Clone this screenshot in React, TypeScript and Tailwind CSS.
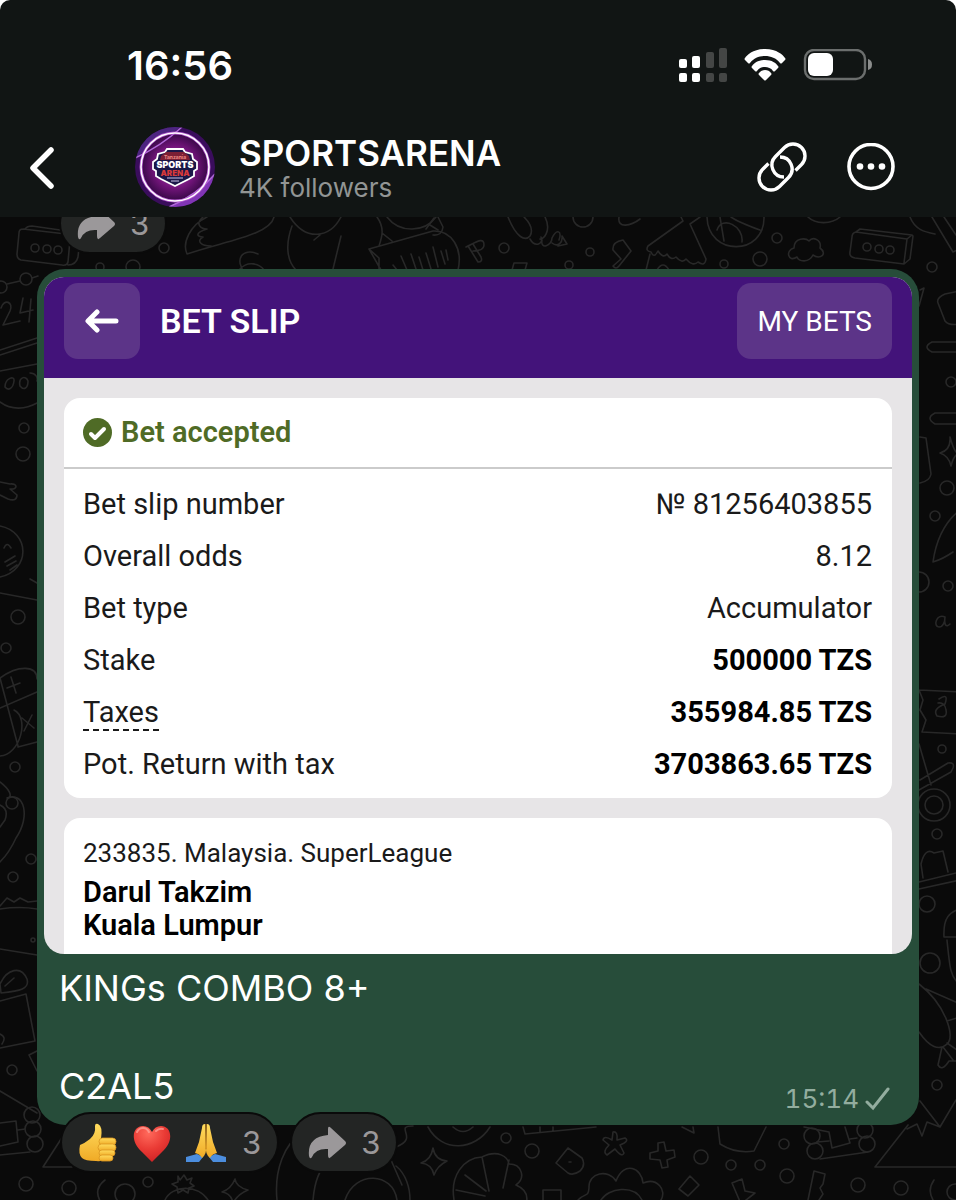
import type { ReactNode } from "react";

const slipRows = [
  { label: "Bet slip number", value: "№ 81256403855" },
  { label: "Overall odds", value: "8.12" },
  { label: "Bet type", value: "Accumulator" },
  { label: "Stake", value: "500000 TZS", strong: true },
  { label: "Taxes", value: "355984.85 TZS", strong: true, hint: true },
  { label: "Pot. Return with tax", value: "3703863.65 TZS", strong: true },
];

// small circles scattered over the chat wallpaper: [x, y, radius]
const dots = [
  [164, 248, 5], [100, 267, 4], [133, 267, 7], [504, 248, 5], [590, 252, 4], [569, 265, 4],
  [583, 217, 10], [777, 238, 5], [760, 259, 7], [724, 264, 4], [932, 267, 5],
  [26, 279, 6], [1, 287, 6], [24, 428, 5], [23, 454, 7], [18, 617, 7], [6, 648, 5],
  [15, 767, 5], [12, 803, 6], [31, 859, 5], [13, 877, 5], [33, 940, 2], [12, 1070, 5],
  [32, 1115, 8], [33, 1129, 8], [35, 1144, 8], [26, 1184, 7],
  [951, 382, 5], [947, 488, 7], [935, 516, 5], [948, 586, 5], [919, 582, 10], [942, 749, 4],
  [934, 805, 16], [934, 805, 9], [937, 834, 5], [927, 904, 8], [930, 963, 10], [937, 1085, 5],
  [69, 1188, 7], [148, 1182, 5], [125, 1194, 10], [506, 1138, 5], [532, 1151, 7], [701, 1157, 7],
  [731, 1165, 5], [760, 1165, 5], [784, 1144, 5], [787, 1176, 7], [858, 1185, 7], [901, 1188, 7],
  [812, 1136, 8], [815, 1151, 8], [865, 1130, 8], [867, 1144, 8], [955, 1192, 8],
  [35, 248, 4], [47, 249, 4], [58, 250, 4], [867, 247, 4], [879, 249, 4], [890, 250, 4],
];

const doodles = [
  // strip under the header
  "M23 229 66 234Q71 235 70 240L68 262Q67 266 62 265L21 260Q17 259 17 254L19 233Q19 229 23 229M25 229Q27 226 32 226L74 232Q80 233 80 238L78 257Q76 265 68 265",
  "M274 217C270 235 225 241 187 254C182 243 190 225 207 217M203 217C194 225 202 229 207 229C194 233 197 237 203 237C196 241 201 246 211 246",
  "M258 254C242 247 234 260 245 273M240 269C248 260 260 264 264 270M290 217C306 242 330 238 341 217M292 226C285 245 287 261 296 270M320 235 314 240M341 236 333 269",
  "M377 217C385 228 382 237 379 246M387 217C400 234 425 232 436 217M382 233 392 241M369 249 433 231C452 230 463 249 458 270M369 249 379 258V270M369 249 381 270",
  "M393 265 397 270M401 256 407 270M411 254 416 269M419 257 423 270M426 253 431 269M433 247 438 267M441 251 445 264M446 250 448 260M426 229 434 218M433 235Q442 236 443 227L438 217M430 225 438 230",
  "M466 247C475 243 484 236 484 245C484 249 479 251 473 251M468 246 478 262Q483 262 481 257L473 244",
  "M508 217C516 237 525 242 530 236C534 229 529 222 524 217M530 239C535 248 544 244 541 237M545 217C552 231 543 240 540 239M542 240C540 250 552 246 552 238C557 228 562 231 559 240M552 243C558 248 563 242 562 236L567 244L558 246",
  "M512 270 514 263 527 263 525 270M619 217C617 229 631 226 640 219M623 240Q612 242 613 250L621 259 613 266Q616 270 619 266L631 251 623 240",
  "M681 217 683 221 648 246Q645 251 651 252Q654 259 658 251Q663 259 667 254Q671 261 676 257Q682 264 686 259Q693 267 698 262Q705 267 706 259L690 224 700 217M650 254 646 270M657 270Q663 260 669 270",
  "M707 217C708 257 765 256 764 217M720 217 724 241M731 217Q738 222 760 230M717 230C722 215 744 226 742 242",
  "M797 257C788 263 785 250 794 248C794 237 806 238 809 241C813 236 822 240 820 248C828 254 820 260 813 255C809 263 799 262 797 257M808 217C815 224 831 225 840 217",
  "M856 232 907 239 912 235 913 236 910 259 904 264 855 258Q849 257 850 252L852 237Q852 233 856 232M856 232 860 229 912 235M907 239 904 263",
  "M910 217C915 230 925 232 935 234M932 217 953 252 960 249M944 217 956 235",
  // left edge
  "M7 284 20 281M32 278 38 276M0 350 37 338M0 355 37 343M0 371 37 364M0 402C12 411 26 409 37 403M5 387C5 378 15 375 14 381C13 389 8 391 5 387M20 386C18 377 26 375 28 381C28 388 24 391 20 386M30 373C36 373 38 378 37 381",
  "M0 482 10 484C18 483 18 490 10 489L17 495Q17 502 8 499L0 495M0 526C30 532 31 570 0 577M4 548Q7 541 11 548M5 562 15 556M7 566 16 561M10 570 17 565M0 593 37 600M30 579 37 583",
  "M0 678C18 665 37 665 37 679M0 708 37 692M0 678 18 746M14 710C30 718 20 755 0 756M18 747 37 742M7 688 20 683M11 677 16 693M22 718 34 728M32 715 24 731",
  "M0 782C9 789 13 796 8 798M7 798C24 791 31 816 16 838 11 849 5 857 0 862M0 805Q9 809 5 820L0 827M0 906 7 898 14 902 20 898 28 902 37 901M0 949 37 955M0 909Q20 906 37 909",
  "M0 984C7 969 21 965 27 979C30 989 20 991 1 993ZM5 986 14 978M0 1001 26 994 35 1041 0 1048M0 1034Q7 1037 2 1044M29 1055 37 1051M29 1055 37 1071M0 1091 37 1113M0 1123 16 1121 18 1142 0 1146M18 1130 25 1129M0 1155 30 1152",
  // right edge
  "M960 291 945 294Q936 298 938 303L945 321Q949 326 960 324M960 342H932Q922 347 932 352H960M960 413H935Q925 418 935 424H960M920 437 926 438 931 474Q930 481 920 483M920 290 924 288 919 306",
  "M950 437Q951 450 940 453Q949 456 951 466Q954 454 960 453M956 452Q953 448 950 437M960 510Q938 527 933 562 943 559 953 552 960 547M933 562 944 551M930 604 925 635 960 640M930 604 960 608M919 667 929 672 960 674M960 650Q942 657 960 665",
  "M919 690 923 700 920 710 926 720 922 732 960 734M919 690 960 692M939 699Q949 692 945 704Q932 709 937 716Q948 719 946 710Q945 702 938 703M919 744 931 785M920 780 948 763Q955 762 953 768L951 772 919 790",
  "M919 882 960 872M919 889 960 880M923 878 921 864Q925 847 934 853L943 851 948 872M944 937C943 917 950 912 960 909M944 937 960 937M947 940C950 971 951 975 957 982M919 984C945 1004 956 1037 947 1044Q935 1055 919 1032M926 989 960 1004M947 1021 960 1017M942 1047 938 1065Q942 1072 949 1061L960 1061M943 1047 953 1060M947 1043 960 1052",
  "M875 1167 908 1125M907 1129 917 1124 922 1136 927 1122 940 1127 956 1100M920 1101 940 1127M875 1167H960M934 1180Q927 1190 933 1200",
  // strip under the bubble
  "M43 1167 63 1136M43 1167H72M105 1180Q92 1190 102 1204M165 1200C172 1185 198 1184 208 1200M178 1176 180 1180 184 1175 187 1180 192 1178 190 1183 194 1186 189 1188 188 1193 183 1190 178 1193 177 1187 172 1184 178 1182Z",
  "M235 1179Q236 1187 248 1190Q238 1194 233 1203Q231 1193 222 1192Q231 1189 235 1179M277 1200C274 1170 284 1144 304 1130M313 1200C315 1178 321 1168 327 1164M396 1166C406 1174 410 1188 410 1200M396 1147C420 1138 393 1126 413 1126M345 1200C355 1170 393 1172 397 1200M391 1160 402 1185",
  "M433 1148Q435 1160 447 1161Q437 1166 434 1175Q432 1164 421 1163Q431 1160 433 1148M428 1127C442 1153 475 1151 490 1127M453 1127Q463 1136 473 1127M454 1200C450 1176 463 1158 482 1157C498 1149 508 1157 509 1164C522 1164 526 1178 516 1185Q530 1191 526 1204M482 1157 489 1191M509 1160 503 1188M465 1175 486 1191M456 1190 485 1196",
  "M523 1127 525 1134 596 1127M540 1127V1132M553 1127V1131M682 1127 694 1133 693 1127M718 1127 720 1144Q736 1154 754 1151L766 1127",
  "M613 1132Q618 1131 617 1140L625 1138Q630 1141 620 1145L624 1153Q622 1158 615 1149L607 1155Q602 1152 609 1145L603 1140Q604 1135 612 1140ZM658 1143 664 1142 666 1151 674 1150 675 1157 667 1160 668 1167 662 1168 660 1160 650 1159 650 1153 658 1151Z",
  "M568 1148 582 1158Q586 1165 580 1171Q573 1176 568 1173L556 1163ZM569 1162H571M578 1200C586 1192 588 1198 589 1188C588 1172 609 1169 616 1181C624 1160 642 1168 643 1183C657 1177 667 1190 661 1200M601 1200C608 1188 634 1184 642 1200",
  "M690 1176 699 1185 688 1196 679 1189ZM732 1183 742 1179 745 1191 755 1193 741 1204ZM814 1171 825 1174 823 1184 820 1188 823 1194 819 1200M814 1171 808 1200M804 1127 829 1132 832 1148 850 1143 845 1127M817 1142 829 1141M850 1139 857 1138M820 1159 868 1152M543 1200V1190H561V1200",
];

function Wallpaper() {
  return (
    <svg
      aria-hidden="true"
      viewBox="0 217 956 983"
      preserveAspectRatio="xMidYMin slice"
      className="absolute inset-0 h-full w-full"
      fill="none"
      stroke="#282828"
      strokeWidth="1.6"
      strokeLinejoin="round"
      strokeLinecap="round"
    >
      {dots.map(([x, y, r], i) => (
        <circle key={i} cx={x} cy={y} r={r} />
      ))}
      {doodles.map((d) => (
        <path key={d} d={d} />
      ))}
      <path d="M1 308C4 298 14 302 10 311L3 325 20 321M23 298 20 313 33 310M31 299 29 322" />
      <path d="M945 617C936 613 933 627 939 627C943 627 945 622 945 617C944 625 946 628 950 624" />
    </svg>
  );
}

function StatusBar() {
  return (
    <div className="flex h-[50px] items-center pr-[83px] pl-[127px] text-white">
      <span className="pt-[2px] text-[40px] leading-[50px] font-semibold">16:56</span>
      <svg aria-hidden="true" viewBox="0 0 50 34" className="ml-auto h-[34px] w-[50px]" fill="#fff">
        <rect x="1" y="11" width="8" height="9" rx="2" />
        <rect x="14" y="8" width="8" height="12" rx="2" />
        <rect x="28" y="4" width="8" height="16" rx="2" fill="#444645" />
        <rect x="41" y="0" width="8" height="20" rx="2" fill="#444645" />
        <rect x="1" y="25" width="8" height="9" rx="2" />
        <rect x="14" y="25" width="8" height="9" rx="2" />
        <rect x="28" y="25" width="8" height="9" rx="2" fill="#444645" />
        <rect x="41" y="25" width="8" height="9" rx="2" fill="#444645" />
      </svg>
      <svg aria-hidden="true" viewBox="0 0 42 32" className="ml-4 h-8 w-[42px]" fill="#fff">
        <path d="M21 0C33 0 39 6 41 9Q42 10 41 11L38 14Q37 15 36 14C32 9 27 7 21 7S10 9 6 14Q5 15 4 14L1 11Q0 10 1 9C3 6 9 0 21 0Z" />
        <path d="M21 11C28 11 32 14 34 17Q35 18 34 19L31 22Q30 23 29 22C27 19 24 18 21 18S15 19 13 22Q12 23 11 22L8 19Q7 18 8 17C10 14 14 11 21 11Z" />
        <path d="M21 21Q25 21 27 24Q28 25 27 26L22 31Q21 32 20 31L15 26Q14 25 15 24Q17 21 21 21Z" />
      </svg>
      <svg aria-hidden="true" viewBox="0 0 70 32" className="ml-[17px] h-8 w-[70px]">
        <rect x="2" y="1" width="60" height="29" rx="9" fill="none" stroke="#6b6e6d" strokeWidth="2.4" />
        <rect x="5" y="4" width="25" height="23" rx="6" fill="#fff" />
        <path d="M65 10Q69 11 69 15.500T65 21Z" fill="#8b8d8c" />
      </svg>
    </div>
  );
}

function ChannelLogo() {
  return (
    <svg role="img" aria-label="Sports Arena" viewBox="0 0 80 80" className="h-20 w-20 shrink-0">
      <defs>
        <radialGradient id="logoBg">
          <stop offset="0" stopColor="#b968c4" />
          <stop offset=".6" stopColor="#74157c" />
          <stop offset="1" stopColor="#360845" />
        </radialGradient>
        <clipPath id="logoClip">
          <circle cx="40" cy="40" r="40" />
        </clipPath>
      </defs>
      <g clipPath="url(#logoClip)">
        <rect width="80" height="80" fill="#3a0d5c" />
        <path d="M0 0H46L0 31Z" fill="#4d2580" />
        <path d="M80 80H34Q60 68 80 48Z" fill="#8135b5" />
        <circle cx="40" cy="40" r="34" fill="url(#logoBg)" />
        <path d="M0 31Q25 20 47 0M34 80Q62 68 80 47" stroke="#b068d8" strokeWidth="1.5" fill="none" />
        <circle cx="40" cy="40" r="34" fill="none" stroke="#b65bd0" strokeWidth="3" />
        <circle cx="40" cy="40" r="34" fill="none" stroke="#fff" strokeWidth="1.500" />
        <path
          d="M32 22H48L50 25 57 27 58 32 62 35V42L59 44V49L54 52 40 59 26 52 21 49V44L18 42V35L22 32 23 27 30 25Z"
          fill="#1b1748"
          stroke="#fff"
          strokeWidth="1.8"
        />
        <path d="M31 25H49L54 29 55 33H25L26 29Z" fill="#7c1f35" />
        <path d="M32 51H48M36 54H44" stroke="#c9c3e6" />
        <text x="40" y="32" textAnchor="middle" fontSize="5" fontWeight="700" fill="#f08c86">Tanzania</text>
        <text x="40" y="41" textAnchor="middle" fontSize="9" fontWeight="900" fill="#fff">SPORTS</text>
        <text x="40" y="49" textAnchor="middle" fontSize="8" fontWeight="900" fill="#d63a3a">ARENA</text>
      </g>
    </svg>
  );
}

function ChannelHeader() {
  return (
    <div className="mt-[37px] flex h-20 items-center pr-[61px] pl-[28px] text-white">
      <button type="button" aria-label="Back" className="mr-[78px] shrink-0">
        <svg viewBox="0 0 29 46" className="h-[46px] w-[29px]" fill="none" stroke="currentColor" strokeWidth="5.500" strokeLinecap="round" strokeLinejoin="round">
          <path d="M23 6 5 24 23 42" />
        </svg>
      </button>
      <ChannelLogo />
      <div className="ml-6 min-w-0 flex-1 pt-[2px]">
        <h1 className="text-[35px] leading-[40px] font-semibold">SPORTSARENA</h1>
        <p className="text-[26px] leading-[30px] text-[#929594]">4K followers</p>
      </div>
      <button type="button" aria-label="Copy link" className="shrink-0">
        <svg viewBox="0 0 50 50" className="h-[50px] w-[50px]" fill="none" stroke="currentColor" strokeWidth="3.4">
          <path d="M38.500 28.500 44.500 22.500A12 12 0 0 0 27.500 5.500L18.500 14.500A12 12 0 0 0 27 35" />
          <path d="M11.500 21.500 5.500 27.500A12 12 0 0 0 22.500 44.500L31.500 35.500A12 12 0 0 0 23 15" />
        </svg>
      </button>
      <button type="button" aria-label="More options" className="ml-10 shrink-0">
        <svg viewBox="0 0 48 48" className="h-12 w-12" fill="currentColor">
          <circle cx="24" cy="23.500" r="22" fill="none" stroke="currentColor" strokeWidth="3.600" />
          <circle cx="13" cy="23.500" r="3.300" />
          <circle cx="24" cy="23.500" r="3.300" />
          <circle cx="35" cy="23.500" r="3.300" />
        </svg>
      </button>
    </div>
  );
}

function BetSlip() {
  return (
    <div className="h-[677px] overflow-hidden rounded-[20px] bg-[#e7e5e7] font-['Roboto',sans-serif] text-[#1a1a1a]">
      <div className="flex h-[101px] items-start bg-[#43137a] px-5 pt-[6px] text-white">
        <button type="button" aria-label="Back to slips" className="flex h-[76px] w-[76px] items-center justify-center rounded-[14px] bg-[#5c3488]">
          <svg viewBox="0 0 34 26" className="h-[26px] w-[34px]" fill="none" stroke="currentColor" strokeWidth="5" strokeLinecap="round" strokeLinejoin="round">
            <path d="M31 13H4M12 4 3 13 12 22" />
          </svg>
        </button>
        <h2 className="ml-5 text-[34px] leading-[76px] font-semibold">BET SLIP</h2>
        <button type="button" className="ml-auto h-[76px] rounded-[14px] bg-[#5c3488] px-5 pt-[2px] text-[28px]">
          MY BETS
        </button>
      </div>

      <section className="mx-5 mt-5 h-[400px] rounded-[16px] bg-white">
        <div className="flex h-[71px] items-center gap-[9px] border-b-2 border-[#cbcbcb] px-[19px] text-[#4f6b26]">
          <svg aria-hidden="true" viewBox="0 0 29 29" className="h-[29px] w-[29px]">
            <circle cx="14.500" cy="14.500" r="14.500" fill="currentColor" />
            <path d="M8 16 12 20 21 11" fill="none" stroke="#fff" strokeWidth="4" strokeLinecap="round" strokeLinejoin="round" />
          </svg>
          <h3 className="text-[29px] font-semibold">Bet accepted</h3>
        </div>
        <table className="mt-[9px] w-full text-[29px] leading-[36px]">
          <tbody>
            {slipRows.map((row) => (
              <tr key={row.label} className="h-[52px]">
                <th scope="row" className="pl-[19px] text-left font-normal">
                  <span className={row.hint ? "border-b-2 border-dashed border-[#1a1a1a]" : ""}>{row.label}</span>
                </th>
                <td className={row.strong ? "pr-5 text-right font-bold text-black" : "pr-5 text-right"}>{row.value}</td>
              </tr>
            ))}
          </tbody>
        </table>
      </section>

      <section className="mx-5 mt-5 rounded-t-[16px] bg-white px-[19px] pt-4 pb-4">
        <p className="text-[26px] leading-[38px]">233835. Malaysia. SuperLeague</p>
        <p className="mt-1 text-[29px] leading-[33px] font-semibold text-black">
          Darul Takzim
          <br />
          Kuala Lumpur
        </p>
      </section>
    </div>
  );
}

const ForwardIcon = () => (
  <svg aria-hidden="true" viewBox="0 0 39 33" className="h-[33px] w-[39px]" fill="#9b989a">
    <path d="M20 3Q20-1 23 2L37 15Q39 17 37 19L23 31Q20 34 20 29V23Q8 22 4 31Q2 34 1 30Q-1 11 20 9Z" />
  </svg>
);

const ThumbIcon = () => (
  <svg aria-hidden="true" viewBox="0 0 40 40" className="h-10 w-10">
    <defs>
      <linearGradient id="skin" x1="0" y1="0" x2="0" y2="1">
        <stop offset="0" stopColor="#ffdc5e" />
        <stop offset="1" stopColor="#f0aa26" />
      </linearGradient>
    </defs>
    <path d="M2 22Q7 20 12 16 18 11 17 3 17 0 20 1 25 3 23 16H28V34Q25 39 18 38 7 38 4 35 0 31 2 22Z" fill="url(#skin)" />
    <g fill="url(#skin)" stroke="#d99420" strokeWidth=".8">
      <rect x="21" y="15" width="17" height="7" rx="3.5" />
      <rect x="20" y="21" width="18" height="7" rx="3.5" />
      <rect x="21" y="27" width="16" height="6" rx="3" />
      <rect x="21" y="32" width="14" height="6" rx="3" />
    </g>
  </svg>
);

const HeartIcon = () => (
  <svg aria-hidden="true" viewBox="0 0 40 40" className="h-10 w-10">
    <defs>
      <radialGradient id="heart" cx=".4" cy=".2" r=".9">
        <stop offset="0" stopColor="#ff6a5c" />
        <stop offset=".5" stopColor="#ea3b35" />
        <stop offset="1" stopColor="#c81d22" />
      </radialGradient>
    </defs>
    <path d="M20 39Q17 36 10 29C-3 17 1 3 11 3Q17 3 20 9Q23 3 29 3C39 3 43 17 30 29Q23 36 20 39Z" fill="url(#heart)" />
    <path d="M5 9Q7 5 11 5T17 9M24 8Q27 5 31 6" stroke="#ffa79e" strokeWidth="2" fill="none" strokeLinecap="round" opacity=".7" />
  </svg>
);

const PrayIcon = () => (
  <svg aria-hidden="true" viewBox="0 0 40 40" className="h-10 w-10">
    <path d="M11 31 0 34V39H13L17 34ZM29 31 40 34V39H27L23 34Z" fill="#4c8ede" />
    <path d="M19 1Q16 1 16 5L13 19 9 30Q14 31 16 35 21 31 20 24ZM21 1Q24 1 24 5L27 19 31 30Q26 31 24 35 19 31 20 24Z" fill="url(#skin)" />
    <path d="M20 1V26" stroke="#c98518" strokeWidth="1.2" />
  </svg>
);

function Pill({ label, children }: { label: string; children: ReactNode }) {
  return (
    <button
      type="button"
      aria-label={label}
      className="flex h-[57px] items-center rounded-full bg-[#232524] px-4 text-[31px] leading-none text-[#9b989a] ring-2 ring-[#0a0a0a]"
    >
      {children}
    </button>
  );
}

export default function App() {
  return (
    <div className="flex min-h-screen flex-col bg-white font-['Inter','Liberation_Sans',sans-serif]">
      <header className="rounded-t-[10px] bg-[#111514] pt-10 pb-[10px]">
        <StatusBar />
        <ChannelHeader />
      </header>

      <main className="relative flex flex-1 flex-col overflow-hidden bg-[#0a0a0a] pb-[27px]">
        <Wallpaper />

        {/* reactions of the previous post, scrolled under the header */}
        <div className="relative -mt-[22px] flex pl-[61px]">
          <Pill label="Forward, 3">
            <ForwardIcon />
            <span className="ml-[14px]">3</span>
          </Pill>
        </div>

        <article className="relative mx-[37px] mt-[17px] rounded-[28px] bg-[#274d3a] px-[7px] pt-2 pb-[14px] text-white">
          <BetSlip />
          <div className="mt-[10px] flex items-end justify-between pr-[22px] pl-[15px]">
            <p className="text-[36px] leading-[49px] whitespace-pre-line">{"KINGs COMBO 8+\n\nC2AL5"}</p>
            <div className="flex items-center gap-[6px] text-[26px] leading-[24px] text-[#93ad9f]">
              <time className="tabular-nums">15:14</time>
              <svg aria-label="Sent" viewBox="0 0 25 24" className="h-6 w-[25px]" fill="none" stroke="currentColor" strokeWidth="3" strokeLinecap="round">
                <path d="M2 15 8 21 23 2" />
              </svg>
            </div>
          </div>
        </article>

        <div className="relative -mt-[11px] flex gap-[15px] pl-[62px]">
          <Pill label="Reactions, 3">
            <ThumbIcon />
            <span className="ml-[14px]"><HeartIcon /></span>
            <span className="ml-[14px]"><PrayIcon /></span>
            <span className="ml-4">3</span>
          </Pill>
          <Pill label="Forward, 3">
            <ForwardIcon />
            <span className="ml-[14px]">3</span>
          </Pill>
        </div>
      </main>
    </div>
  );
}
